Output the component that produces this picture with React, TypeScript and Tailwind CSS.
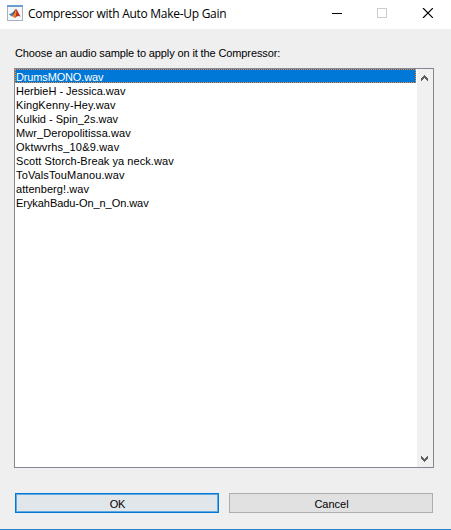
const files = [
  { name: "DrumsMONO.wav", tracking: "tracking-[-0.15px]" },
  { name: "HerbieH - Jessica.wav", tracking: "tracking-[0px]" },
  { name: "KingKenny-Hey.wav", tracking: "tracking-[0.08px]" },
  { name: "Kulkid - Spin_2s.wav", tracking: "tracking-[0px]" },
  { name: "Mwr_Deropolitissa.wav", tracking: "tracking-[0.08px]" },
  { name: "Oktwvrhs_10&9.wav", tracking: "tracking-[0.18px]" },
  { name: "Scott Storch-Break ya neck.wav", tracking: "tracking-[0.06px]" },
  { name: "ToValsTouManou.wav", tracking: "tracking-[0.13px]" },
  { name: "attenberg!.wav", tracking: "tracking-[0.06px]" },
  { name: "ErykahBadu-On_n_On.wav", tracking: "tracking-[-0.06px]" },
];

function MatlabIcon() {
  return (
    <svg width="16" height="16" viewBox="0 0 16 16" className="shrink-0">
      <rect x="0.5" y="0.5" width="15" height="15" fill="#f4f7fa" stroke="#a9b3bd" />
      <rect x="0" y="0" width="16" height="2" fill="#6d9dcf" />
      <path d="M2 9.3 5.5 7.7 7 9.5 4.5 11.3Z" fill="#3f7fb5" />
      <path d="M5.2 7.8C7 7 7.4 4.8 8.8 4L7 9.7Z" fill="#285a8e" />
      <path d="M8.8 4C10.6 4.4 11.6 9 13.8 11.6 11.5 10.2 9.8 11 7.8 13 7 11.5 5.8 10.8 4.5 11.3 7 9.7 7.5 5.5 8.8 4Z" fill="#b8321c" />
      <path d="M8.8 4C9.8 6 9.4 10 7.8 13 7.2 12 6.5 11.2 5.5 11 7.5 9.5 8.3 6 8.8 4Z" fill="#ee8b2d" />
    </svg>
  );
}

function Chevron({ down = false }: { down?: boolean }) {
  return (
    <svg width="7" height="6" viewBox="0 0 7 6" shapeRendering="crispEdges" className={down ? "rotate-180" : ""}>
      <path
        d="M3 0H4V1H5V2H6V3H7V6H6V5H5V4H4V3H3V4H2V5H1V6H0V3H1V2H2V1H3Z"
        fill="#606060"
      />
    </svg>
  );
}

function TitleBar() {
  return (
    <header className="flex h-[29px] shrink-0 items-start bg-white">
      <div className="flex flex-1 gap-[5px] pt-[5px] pl-[7px]">
        <MatlabIcon />
        <h1 className="font-['Open_Sans','Noto_Sans',sans-serif] text-[12px] leading-[17px] tracking-[-0.28px] whitespace-nowrap">
          Compressor with Auto Make-Up Gain
        </h1>
      </div>
      <div className="flex gap-[35px] pt-[8px] pr-[18px]">
        <svg width="10" height="10" shapeRendering="crispEdges">
          <path d="M0 5.5H10" stroke="#000" />
        </svg>
        <svg width="10" height="10" shapeRendering="crispEdges">
          <rect x="0.5" y="0.5" width="9" height="9" fill="none" stroke="#ccc" />
        </svg>
        <svg width="11" height="10" viewBox="0 0 11 10">
          <path d="M1 0 11 10M11 0 1 10" stroke="#000" strokeWidth="1.2" />
        </svg>
      </div>
    </header>
  );
}

export default function App() {
  return (
    <div className="flex h-[530px] w-[451px] flex-col overflow-hidden border-b border-[#2a84cc] bg-[#efefef] font-['Liberation_Sans',Arial,sans-serif] text-[11px] text-black">
      <TitleBar />
      <main className="flex flex-1 flex-col pt-[17px] pr-[17px] pl-[14px]">
        <p className="h-[22px] pl-px leading-[14px] tracking-[-0.12px] whitespace-nowrap">
          Choose an audio sample to apply on it the Compressor:
        </p>
        <div className="flex h-[400px] w-[420px] border border-[#828790] bg-white">
          <ul className="flex-1">
            {files.map((file, i) => (
              <li
                key={file.name}
                className={`mr-px h-[14px] pl-px leading-[16px] whitespace-nowrap ${
                  i === 0
                    ? "bg-[#0078d7] text-white outline-1 -outline-offset-1 outline-dotted outline-[#ff8728]"
                    : ""
                }`}
              >
                <span className={file.tracking}>{file.name}</span>
              </li>
            ))}
          </ul>
          <div className="flex w-[16px] flex-col items-start justify-between bg-[#f0f0f0] pt-[6px] pb-[5px] pl-[4px]">
            <Chevron />
            <Chevron down />
          </div>
        </div>
        <div className="mt-[25px] flex gap-[10px] pl-px">
          <button className="h-[20px] w-[204px] border border-[#0078d7] bg-[#e1e6ea] pl-px leading-[20px] tracking-[-0.3px] shadow-[inset_0_0_0_1px_#5fa9e2]">
            OK
          </button>
          <button className="h-[20px] w-[204px] border border-[#adadad] bg-[#e1e1e1] pl-px leading-[20px]">
            Cancel
          </button>
        </div>
      </main>
    </div>
  );
}
